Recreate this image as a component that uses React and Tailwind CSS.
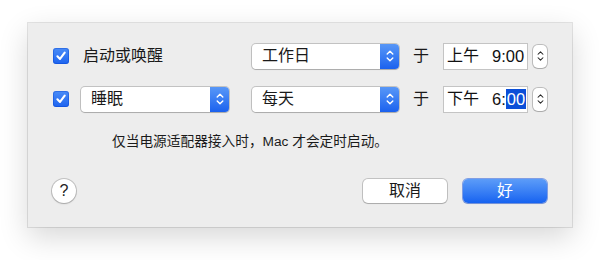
import React from 'react';

const font = { fontFamily: '"Liberation Sans", "Noto Sans CJK SC", sans-serif' };

const Check = () => (
  <div className="w-4 h-4 rounded-[3px] bg-gradient-to-b from-[#4a8cf7] to-[#1d63ef] flex items-center justify-center shadow-[inset_0_0_0_1px_rgba(0,60,200,0.35)]">
    <svg width="12" height="12" viewBox="0 0 12 12">
      <path d="M2.4 6.3 L5 8.9 L9.7 2.7" fill="none" stroke="white" strokeWidth="2.1" strokeLinecap="round" strokeLinejoin="round" />
    </svg>
  </div>
);

const UpDown = ({ color = 'white', w = 8, h = 14, sw = 1.4 }) => (
  <svg width={w} height={h} viewBox="0 0 8 14">
    <path d="M1.2 5 L4 2.2 L6.8 5" fill="none" stroke={color} strokeWidth={sw} strokeLinecap="round" strokeLinejoin="round" />
    <path d="M1.2 9 L4 11.8 L6.8 9" fill="none" stroke={color} strokeWidth={sw} strokeLinecap="round" strokeLinejoin="round" />
  </svg>
);

const Popup = ({ label, width }) => (
  <div
    className="h-[25px] flex rounded-[4px] bg-white shadow-[0_0_0_1px_rgba(0,0,0,0.18),0_1px_1px_rgba(0,0,0,0.12)] overflow-hidden"
    style={{ width }}
  >
    <div className="flex-1 flex items-center pl-[10px] text-[16px] text-[#1a1a1a]">{label}</div>
    <div className="w-[19px] flex items-center justify-center bg-gradient-to-b from-[#5897f7] to-[#1b61ee]">
      <UpDown />
    </div>
  </div>
);

const TimeField = ({ ampm, hour, selected }) => (
  <div className="flex items-center">
    <div className="w-[85px] h-[27px] bg-white border border-[#c4c4c4] flex items-center pl-[3px] text-[16px] text-[#111]">
      <span>{ampm}</span>
      <span className="ml-[13px] text-[16.5px]">{hour}:</span>
      {selected ? (
        <span className="bg-[#0b4fd8] text-white px-[1px] leading-[20px] text-[16.5px]">00</span>
      ) : (
        <span className="text-[16.5px]">00</span>
      )}
    </div>
    <div className="ml-[5px] w-[14px] h-[23px] rounded-[5px] bg-white shadow-[0_0_0_1px_rgba(0,0,0,0.2),0_1px_1px_rgba(0,0,0,0.1)] flex items-center justify-center">
      <UpDown color="#222" w={7} h={14} sw={1.2} />
    </div>
  </div>
);

export default function App() {
  return (
    <div className="w-[600px] h-[260px] bg-white pt-[23px] pl-[28px]" style={font}>
      <div className="w-[544px] h-[204px] bg-[#ededed] shadow-[0_0_0_1px_rgba(0,0,0,0.1),0_10px_28px_rgba(0,0,0,0.16)] pl-[25px] pt-[19px]">
        <div className="h-[28px] flex items-center">
          <Check />
          <div className="w-[148px] ml-[14px] text-[16px] text-[#1a1a1a]">启动或唤醒</div>
          <div className="ml-[21px]"><Popup label="工作日" width={147} /></div>
          <div className="ml-[14px] w-[16px] text-[16px] text-[#1a1a1a]">于</div>
          <div className="ml-[14px]"><TimeField ampm="上午" hour="9" /></div>
        </div>
        <div className="h-[28px] mt-[15px] flex items-center">
          <Check />
          <div className="ml-[12px]"><Popup label="睡眠" width={148} /></div>
          <div className="ml-[23px]"><Popup label="每天" width={147} /></div>
          <div className="ml-[14px] w-[16px] text-[16px] text-[#1a1a1a]">于</div>
          <div className="ml-[14px]"><TimeField ampm="下午" hour="6" selected /></div>
        </div>
        <div className="mt-[20px] ml-[59px] h-[18px] leading-[18px] text-[13.7px] text-[#1a1a1a]">
          仅当电源适配器接入时，Mac 才会定时启动。
        </div>
        <div className="mt-[28px] flex items-center pr-[25px]">
          <div className="w-[24px] h-[24px] rounded-full bg-white shadow-[0_0_0_1px_rgba(0,0,0,0.18),0_1px_2px_rgba(0,0,0,0.15)] flex items-center justify-center text-[16px] text-[#222] -ml-[1px]">
            ?
          </div>
          <div className="flex-1" />
          <div className="w-[84px] h-[24px] rounded-[5px] bg-white shadow-[0_0_0_1px_rgba(0,0,0,0.18),0_1px_1px_rgba(0,0,0,0.12)] flex items-center justify-center text-[16px] text-[#1a1a1a]">
            取消
          </div>
          <div className="ml-[16px] w-[84px] h-[24px] rounded-[5px] bg-gradient-to-b from-[#5c9cf8] to-[#1662f0] shadow-[0_0_0_1px_rgba(20,80,220,0.5),0_1px_1px_rgba(0,0,0,0.12)] flex items-center justify-center text-[16px] text-white">
            好
          </div>
        </div>
      </div>
    </div>
  );
}
